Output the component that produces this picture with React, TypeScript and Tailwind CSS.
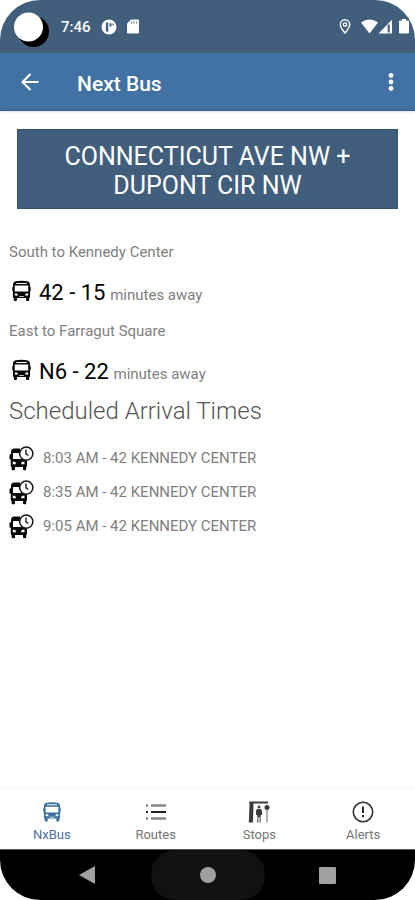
import type { ReactNode } from "react";

function BusIcon({ className }: { className: string }) {
  return (
    <svg viewBox="0 0 20 22" className={className} fill="currentColor" fillRule="evenodd" aria-hidden="true">
      <path d="M4 .8Q10-.6 16 .8 19 1.400 19 4.500V6.500q.7.200.7 1.200v2.800q0 .8-.7.900V17.300q0 .9-.9 1v2.300q0 .9-.9.900h-1.500q-.9 0-.9-.9V18.300H5.200v2.300q0 .9-.9.900H2.800q-.9 0-.9-.9v-2.300q-.9-.1-.9-1V11.400Q.3 11.300.3 10.500V7.700Q.3 6.700 1 6.500V4.500Q1 1.400 4 .8ZM4.500 2.500v1h11v-1ZM2.900 5.300v6.200h14.200V5.300ZM3 13.500v2.200h3.500l-1.200-2.200ZM14.700 13.500l-1.200 2.200H17v-2.200ZM7.500 16.200v.9h5v-.9Z" />
    </svg>
  );
}

function BusClockIcon() {
  return (
    <svg viewBox="0 0 25 25" className="h-[25px] w-[25px] shrink-0" aria-hidden="true">
      <path
        fillRule="evenodd"
        fill="#080808"
        d="M4.500 2.500Q2 3 2 5.500V8Q.5 8 .5 9.500v3.500q0 .8 1.300.8V20q0 1 .8 1v2.300q0 1 1 1h1.400q1 0 1-1V21h8v2.300q0 1 1 1h1.200q1 0 1-1V21q.8-.2.800-1.200v-5L12 12 11 2.500ZM4 7v6h8.500L9.500 7ZM3.800 15.700v2.500h3.200l-.7-2.500ZM12.800 15.700l-.8 2.500h3.500v-2.500Z"
      />
      <circle cx="17.300" cy="7.600" r="6.600" fill="white" stroke="#181818" strokeWidth="1.500" />
      <path d="M17 3.500v4.300l2.400 1.700" fill="none" stroke="#181818" strokeWidth="1.400" />
    </svg>
  );
}

function RoutesIcon() {
  return (
    <svg viewBox="0 0 20 18" className="h-[18px] w-5" aria-hidden="true">
      <path d="M0 2.500h2M5 2.500h15M0 15.500h2M5 15.500h15" stroke="#858585" strokeWidth="2.400" />
      <path d="M0 9h2M5 9h15" stroke="#222" strokeWidth="2" />
    </svg>
  );
}

function StopsIcon() {
  return (
    <svg viewBox="0 0 22 22" className="h-[22px] w-[22px]" fill="#3c3c3c" aria-hidden="true">
      <path d="M1 .5h19v2H5.500L5 21.500H.8L1.500 3Z" />
      <circle cx="11" cy="6" r="1.400" />
      <path d="M9 8h4l1 2v4h-1.200v2H9.200v-2H8v-4Z" />
      <path d="M9.200 16h1.300v5.500H8.800ZM11.500 16h1.300l.3 5.500h-1.600Z" fill="#777" />
      <circle cx="19" cy="6.500" r="2.500" />
      <path d="M18.300 9h1.500v12.500h-1.500Z" fill="#999" />
    </svg>
  );
}

function AlertIcon() {
  return (
    <svg viewBox="0 0 22 22" className="h-[22px] w-[22px]" fill="none" stroke="#303030" aria-hidden="true">
      <circle cx="11" cy="11" r="9.700" strokeWidth="1.600" />
      <path d="M11 5.500v6.500M11 14v2.200" strokeWidth="2" />
    </svg>
  );
}

function StatusBar() {
  return (
    <div className="flex h-[53px] items-center bg-[#415e7c] pr-1.5 pl-3 text-white">
      <svg viewBox="0 0 38 38" className="mt-2 h-[38px] w-[38px]" aria-hidden="true">
        <circle cx="21.500" cy="19.500" r="15.500" fill="black" />
        <circle cx="16.500" cy="15" r="14.500" fill="white" />
      </svg>
      <span className="ml-[11px] text-[15px] leading-5 font-medium">7:46</span>
      <svg viewBox="0 0 16 16" className="ml-2.5 h-4 w-4" aria-hidden="true">
        <circle cx="8" cy="8" r="7.500" fill="white" />
        <path d="M5 3.500h2.200V13H6.200L4.800 11.500ZM8.500 4.200h2V7.500h-2ZM11.600 4.500h1.200v2h-1.200Z" fill="#415e7c" />
      </svg>
      <svg viewBox="0 0 12 15" className="ml-2.5 h-[15px] w-3" aria-hidden="true">
        <path d="M4 .5h7q1 0 1 1v12q0 1-1 1H1q-1 0-1-1V4.500Z" fill="white" />
        <path d="M4.500 2.200v2.500M7 2.200v2.500M9.500 2.200v2.500" stroke="#8b9aaa" strokeWidth="1.200" />
      </svg>
      <svg viewBox="0 0 12 15" className="ml-auto h-[15px] w-3" fill="none" stroke="white" aria-hidden="true">
        <path d="M6 14Q1.300 8.500 1.300 5.500a4.700 4.700 0 0 1 9.400 0Q10.700 8.500 6 14Z" strokeWidth="1.400" />
        <circle cx="6" cy="5.500" r="1.700" strokeWidth="1.300" />
      </svg>
      <svg viewBox="0 0 32 15" className="ml-2.5 h-[15px] w-8" aria-hidden="true">
        <path d="M0 3.500Q8.500-2.500 17 3.500L8.500 14.500Z" fill="white" />
        <path d="M17.500 14.500 31 .8v13.700Z" fill="white" />
        <path d="M27.700 5.500v8" stroke="#415e7c" strokeWidth="2" />
      </svg>
      <svg viewBox="0 0 10 15" className="ml-1.5 h-[15px] w-2.5" fill="white" aria-hidden="true">
        <path d="M3 0h4v1.500h2q1 0 1 1v11q0 1-1 1H1q-1 0-1-1v-11q0-1 1-1h2Z" />
      </svg>
    </div>
  );
}

function AppBar() {
  return (
    <header className="flex h-[58px] items-center border-b border-[#31628f] bg-[#4271a3] px-4 text-white shadow-sm">
      <button type="button" aria-label="Back" className="flex h-10 w-7 items-center justify-center">
        <svg viewBox="0 0 18 18" className="h-[18px] w-[18px]" fill="none" stroke="white" strokeWidth="2" aria-hidden="true">
          <path d="M17.500 9H2M9.500 1 1.500 9l8 8" />
        </svg>
      </button>
      <h1 className="ml-[33px] pt-1 text-[21px] leading-7 font-medium">Next Bus</h1>
      <button type="button" aria-label="More options" className="ml-auto flex h-10 w-4 items-center justify-center">
        <svg viewBox="0 0 6 20" className="h-5 w-1.5" fill="white" aria-hidden="true">
          <circle cx="3" cy="3.500" r="2.400" />
          <circle cx="3" cy="10" r="2.400" />
          <circle cx="3" cy="16.500" r="2.400" />
        </svg>
      </button>
    </header>
  );
}

const arrivals = [
  { direction: "South to Kennedy Center", summary: "42 - 15" },
  { direction: "East to Farragut Square", summary: "N6 - 22" },
];

const scheduled = [
  "8:03 AM - 42 KENNEDY CENTER",
  "8:35 AM - 42 KENNEDY CENTER",
  "9:05 AM - 42 KENNEDY CENTER",
];

const tabs: { label: string; icon: ReactNode; active?: boolean }[] = [
  { label: "NxBus", icon: <BusIcon className="h-[22px] w-[18px] text-[#3d709f]" />, active: true },
  { label: "Routes", icon: <RoutesIcon /> },
  { label: "Stops", icon: <StopsIcon /> },
  { label: "Alerts", icon: <AlertIcon /> },
];

export default function App() {
  return (
    <div className="flex min-h-screen flex-col overflow-hidden rounded-[40px] bg-white font-[Roboto,sans-serif] text-[#808080]">
      <StatusBar />
      <AppBar />
      <main className="flex-1">
        <h2 className="mx-[17px] mt-[18px] border border-[#2f5579] bg-[#415e7c] px-10 pt-3 pb-2 text-center text-[25px] leading-[29px] text-white">
          CONNECTICUT AVE NW + DUPONT CIR NW
        </h2>
        <div className="px-[9px] pt-[33px]">
          {arrivals.map((a) => (
            <section key={a.direction}>
              <h3 className="text-[15px] leading-5">{a.direction}</h3>
              <div className="mt-[15px] mb-3 flex h-8 gap-2 pl-[3px]">
                <BusIcon className="mt-[3px] h-[22px] w-[19px] text-[#080808]" />
                <p className="text-[15px] leading-8">
                  <span className="mr-px text-[22px] text-black">{a.summary}</span> minutes away
                </p>
              </div>
            </section>
          ))}
          <h3 className="-mt-1 text-2xl leading-[30px] font-light text-[#555]">Scheduled Arrival Times</h3>
          <ul className="mt-[15px]">
            {scheduled.map((s) => (
              <li key={s} className="flex h-[34px] items-center gap-[9px] text-[15px] leading-5">
                <BusClockIcon />
                {s}
              </li>
            ))}
          </ul>
        </div>
      </main>
      <nav className="grid h-[61px] grid-cols-4 border-t border-[#f6f6f6]">
        {tabs.map((t) => (
          <button
            key={t.label}
            type="button"
            className={`flex flex-col items-center pt-3 text-[13px] leading-4 ${t.active ? "text-[#4a71a5]" : "text-[#757575]"}`}
          >
            <span className="flex h-[22px] items-center">{t.icon}</span>
            <span className="mt-1">{t.label}</span>
          </button>
        ))}
      </nav>
      <div className="flex h-[51px] items-stretch justify-center border-t border-[#555] bg-black">
        <button type="button" aria-label="System back" className="flex flex-1 items-center justify-center pl-6">
          <svg viewBox="0 0 16 18" className="h-[18px] w-4" fill="#a0a0a0" aria-hidden="true">
            <path d="M16 0v18L0 9Z" />
          </svg>
        </button>
        <button type="button" aria-label="Home" className="flex w-[114px] items-center justify-center rounded-3xl bg-[#111]">
          <span className="h-4 w-4 rounded-full bg-[#a0a0a0]" />
        </button>
        <button type="button" aria-label="Recent apps" className="flex flex-1 items-center justify-center pr-6">
          <span className="h-[17px] w-[17px] rounded-[1px] bg-[#a0a0a0]" />
        </button>
      </div>
    </div>
  );
}
